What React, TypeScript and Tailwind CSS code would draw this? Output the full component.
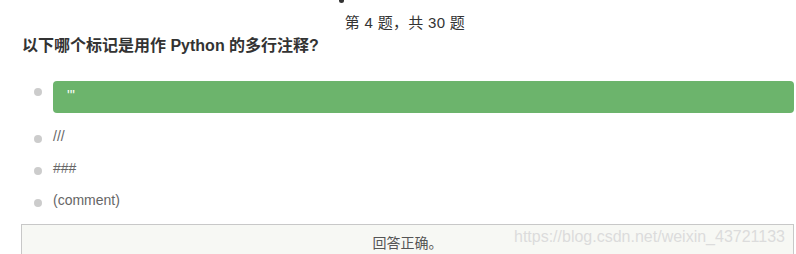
const options = [
  { text: "'''", correct: true },
  { text: "///", correct: false },
  { text: "###", correct: false },
  { text: "(comment)", correct: false },
];

const Bullet = () => (
  <span className="mt-[7px] block h-[8px] w-[8px] shrink-0 rounded-full bg-[#cccccc]" />
);

export default function App() {
  return (
    <div
      className="h-[254px] w-[796px] overflow-hidden bg-white text-[#333]"
      style={{ fontFamily: '"Liberation Sans", Arial, "Noto Sans CJK SC", sans-serif' }}
    >
      {/* cut-off line above */}
      <div className="ml-[339px] h-[3px] w-[5px] rounded-b-sm bg-[#333]" />

      <div className="mt-[11px] pl-[14px] text-center text-[15px] leading-[17px] tracking-[0.3px]">第 4 题，共 30 题</div>

      <h2 className="ml-[22px] mt-[5px] text-[16px] font-bold leading-[20px] text-[#333]">
        以下哪个标记是用作 Python 的多行注释?
      </h2>

      <ul className="ml-[34px] mr-[2px] mt-[25px] flex flex-col">
        {options.map((o, i) =>
          o.correct ? (
            <li key={i} className="flex gap-[11px] pb-[11px]">
              <Bullet />
              <div className="flex h-[32px] flex-1 items-start rounded-[4px] bg-[#6cb46c] pl-[14px] pt-[6px] text-[14px] leading-[17px] text-white">
                {o.text}
              </div>
            </li>
          ) : (
            <li key={i} className="flex h-[32px] gap-[11px] pt-[4px] text-[14px] leading-[17px] text-[#666]">
              <Bullet />
              <span>{o.text}</span>
            </li>
          ),
        )}
      </ul>

      <div className="relative ml-[21px] mr-[2px] mt-[4px] h-[60px] border border-[#c8c8c8] bg-[#f7f8f4] pt-[10px] text-center text-[14px] leading-[17px] text-[#555]">
        回答正确。
        <span className="absolute right-[8px] top-[2px] text-[16px] leading-[20px] text-[#dcdcdc]">
          https://blog.csdn.net/weixin_43721133
        </span>
      </div>
    </div>
  );
}
